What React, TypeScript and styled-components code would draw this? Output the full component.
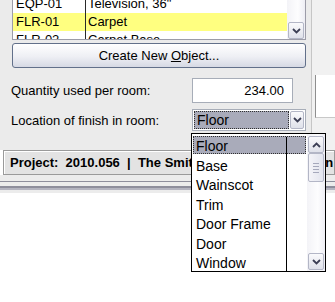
import React from 'react';
import styled, { createGlobalStyle } from 'styled-components';

const GlobalStyle = createGlobalStyle`
  html, body {
    margin: 0;
    padding: 0;
    background: #ffffff;
  }
`;

const Screen = styled.div`
  position: relative;
  width: 335px;
  height: 302px;
  overflow: hidden;
  background: #ffffff;
  font-family: "Liberation Sans", Arial, sans-serif;
  font-size: 13px;
  color: #000;
`;

const Workspace = styled.div`
  display: flex;
  height: 150px;
  background: #ebebeb;
`;

const Panel = styled.div`
  width: 311px;
  border-right: 1px solid #c6c6c6;
  display: flex;
  flex-direction: column;
`;

const SideStrip = styled.div`
  flex: 1;
  background: #f1f1f1;
  padding-top: 75px;
  padding-left: 3px;
`;

const SideWell = styled.div`
  height: 42px;
  background: #ffffff;
  border-left: 1px solid #8e8e8e;
  border-bottom: 1px solid #c8c8c8;
`;

const ObjectList = styled.div`
  margin-left: 12px;
  width: 294px;
  height: 40px;
  box-sizing: border-box;
  display: flex;
  background: #ffffff;
  border: 1px solid #9c9ca8;
  border-top: none;
`;

const Rows = styled.div`
  flex: 1;
  overflow: hidden;
`;

const RowStack = styled.div`
  margin-top: -5px;
`;

const Row = styled.div<{ $active?: boolean }>`
  display: grid;
  grid-template-columns: 72px 1fr;
  height: 18px;
  line-height: 18px;
  background: ${(p) => (p.$active ? '#ffff80' : '#ffffff')};
`;

const CodeCell = styled.div`
  padding-left: 3px;
  white-space: nowrap;
`;

const NameCell = styled.div`
  padding-left: 2px;
  border-left: 1px solid #2a2a2a;
  white-space: nowrap;
`;

const VScroll = styled.div<{ $width: number }>`
  width: ${(p) => p.$width}px;
  display: flex;
  flex-direction: column;
  background: linear-gradient(90deg, #f3f3f7, #fdfdfe 60%, #eeeef4);
`;

const ScrollButton = styled.div`
  height: 17px;
  margin: 0 1px;
  box-sizing: border-box;
  display: flex;
  align-items: center;
  justify-content: center;
  border: 1px solid #b3b6c6;
  border-radius: 2px;
  background: linear-gradient(#fafafc, #dfe1ea);
`;

const Thumb = styled.div`
  height: 29px;
  margin: 0 1px;
  box-sizing: border-box;
  display: flex;
  flex-direction: column;
  align-items: center;
  justify-content: center;
  gap: 2px;
  border: 1px solid #b3b6c6;
  border-radius: 2px;
  background: linear-gradient(90deg, #f4f4f8, #e2e4ee);

  span {
    width: 6px;
    height: 1px;
    background: #a5a8bb;
  }
`;

const Spacer = styled.div`
  flex: 1;
`;

const CreateButton = styled.button`
  margin: 3px 0 0 12px;
  width: 294px;
  height: 25px;
  padding: 0;
  border: 1px solid #62708a;
  border-radius: 3px;
  background: linear-gradient(#ffffff, #eeeff4 55%, #d6d9e4);
  font-family: inherit;
  font-size: 13px;
  color: #000;
  u {
    text-decoration: underline;
  }
`;

const FieldRow = styled.div<{ $top: number }>`
  display: flex;
  align-items: center;
  margin-top: ${(p) => p.$top}px;
`;

const FieldLabel = styled.label`
  width: 192px;
  padding-left: 11px;
  box-sizing: border-box;
  white-space: nowrap;
`;

const NumberInput = styled.div`
  width: 101px;
  height: 25px;
  box-sizing: border-box;
  border: 1px solid #a7adb8;
  background: #ffffff;
  text-align: right;
  padding-right: 8px;
  line-height: 23px;
`;

const Combo = styled.div`
  width: 114px;
  height: 22px;
  box-sizing: border-box;
  display: flex;
  align-items: center;
  gap: 1px;
  padding: 1px;
  background: #ffffff;
  border: 1px solid #a7adb8;
`;

const ComboValue = styled.div`
  flex: 1;
  height: 18px;
  box-sizing: border-box;
  border: 1px dotted #303030;
  background: #a9abba;
  font-size: 14px;
  line-height: 16px;
  padding-left: 2px;
`;

const ComboButton = styled(ScrollButton)`
  width: 14px;
  height: 18px;
  margin: 0;
`;

const StatusBar = styled.div`
  margin-left: 3px;
  height: 25px;
  box-sizing: border-box;
  border: 1px solid #9a9a9a;
  box-shadow: inset 1px 1px 0 #ffffff;
  background: #e3e3e3;
  padding-left: 6px;
  line-height: 23px;
  font-weight: bold;
  white-space: pre;
  overflow: hidden;
`;

const FrameEdge = styled.div`
  height: 18px;
  box-sizing: border-box;
  background: #ececec;
  padding-top: 6px;
  span {
    display: block;
    height: 1px;
    background: #8e8e9c;
  }
  span + span {
    margin-top: 4px;
    height: 2px;
    border-bottom: 2px solid #b4b4c0;
    background: #8e8e9c;
  }
`;

const Popup = styled.div`
  position: absolute;
  left: 191px;
  top: 133px;
  width: 135px;
  height: 139px;
  box-sizing: border-box;
  border: 1px solid #000;
  background: #ffffff;
  display: flex;
`;

const Options = styled.div`
  position: relative;
  width: 115px;
  padding-top: 2px;
`;

const Divider = styled.div`
  position: absolute;
  left: 94px;
  top: 3px;
  bottom: 0;
  width: 1px;
  background: #000;
`;

const Option = styled.div<{ $selected?: boolean }>`
  box-sizing: border-box;
  margin: 0 1px;
  padding-left: 2px;
  font-size: 14px;
  line-height: 18px;
  white-space: nowrap;
  background: ${(p) => (p.$selected ? '#a9abba' : 'transparent')};
  border: 1px dotted ${(p) => (p.$selected ? '#303030' : 'transparent')};
  height: ${(p) => (p.$selected ? '18px' : '19.5px')};
  margin-bottom: ${(p) => (p.$selected ? '1.5px' : '0')};
`;

const Chevron = ({ up }: { up?: boolean }) => (
  <svg width="9" height="6" viewBox="0 0 9 6">
    <path
      d={up ? 'M1 5 L4.5 1.5 L8 5' : 'M1 1 L4.5 4.5 L8 1'}
      fill="none"
      stroke="#3c3f55"
      strokeWidth="1.8"
    />
  </svg>
);

const items = [
  { code: 'EQP-01', name: 'Television, 36"' },
  { code: 'FLR-01', name: 'Carpet' },
  { code: 'FLR-02', name: 'Carpet Base' },
];

const locations = ['Floor', 'Base', 'Wainscot', 'Trim', 'Door Frame', 'Door', 'Window'];

export default function App() {
  return (
    <Screen>
      <GlobalStyle />
      <Workspace>
        <Panel>
          <ObjectList>
            <Rows>
              <RowStack>
                {items.map((it) => (
                  <Row key={it.code} $active={it.code === 'FLR-01'}>
                    <CodeCell>{it.code}</CodeCell>
                    <NameCell>{it.name}</NameCell>
                  </Row>
                ))}
              </RowStack>
            </Rows>
            <VScroll $width={18}>
              <Spacer />
              <ScrollButton>
                <Chevron />
              </ScrollButton>
            </VScroll>
          </ObjectList>
          <CreateButton>
            Create New <u>O</u>bject...
          </CreateButton>
          <FieldRow $top={10}>
            <FieldLabel>Quantity used per room:</FieldLabel>
            <NumberInput>234.00</NumberInput>
          </FieldRow>
          <FieldRow $top={6}>
            <FieldLabel>Location of finish in room:</FieldLabel>
            <Combo>
              <ComboValue>Floor</ComboValue>
              <ComboButton>
                <Chevron />
              </ComboButton>
            </Combo>
          </FieldRow>
        </Panel>
        <SideStrip>
          <SideWell />
        </SideStrip>
      </Workspace>
      <StatusBar>Project:  2010.056  |  The Smith Residence - Addition</StatusBar>
      <FrameEdge>
        <span />
        <span />
      </FrameEdge>

      <Popup>
        <Options>
          {locations.map((loc, i) => (
            <Option key={loc} $selected={i === 0}>
              {loc}
            </Option>
          ))}
          <Divider />
        </Options>
        <VScroll $width={18}>
          <ScrollButton style={{ marginTop: 2 }}>
            <Chevron up />
          </ScrollButton>
          <Thumb>
            <span />
            <span />
            <span />
            <span />
          </Thumb>
          <Spacer />
          <ScrollButton style={{ marginBottom: 1 }}>
            <Chevron />
          </ScrollButton>
        </VScroll>
      </Popup>
    </Screen>
  );
}
